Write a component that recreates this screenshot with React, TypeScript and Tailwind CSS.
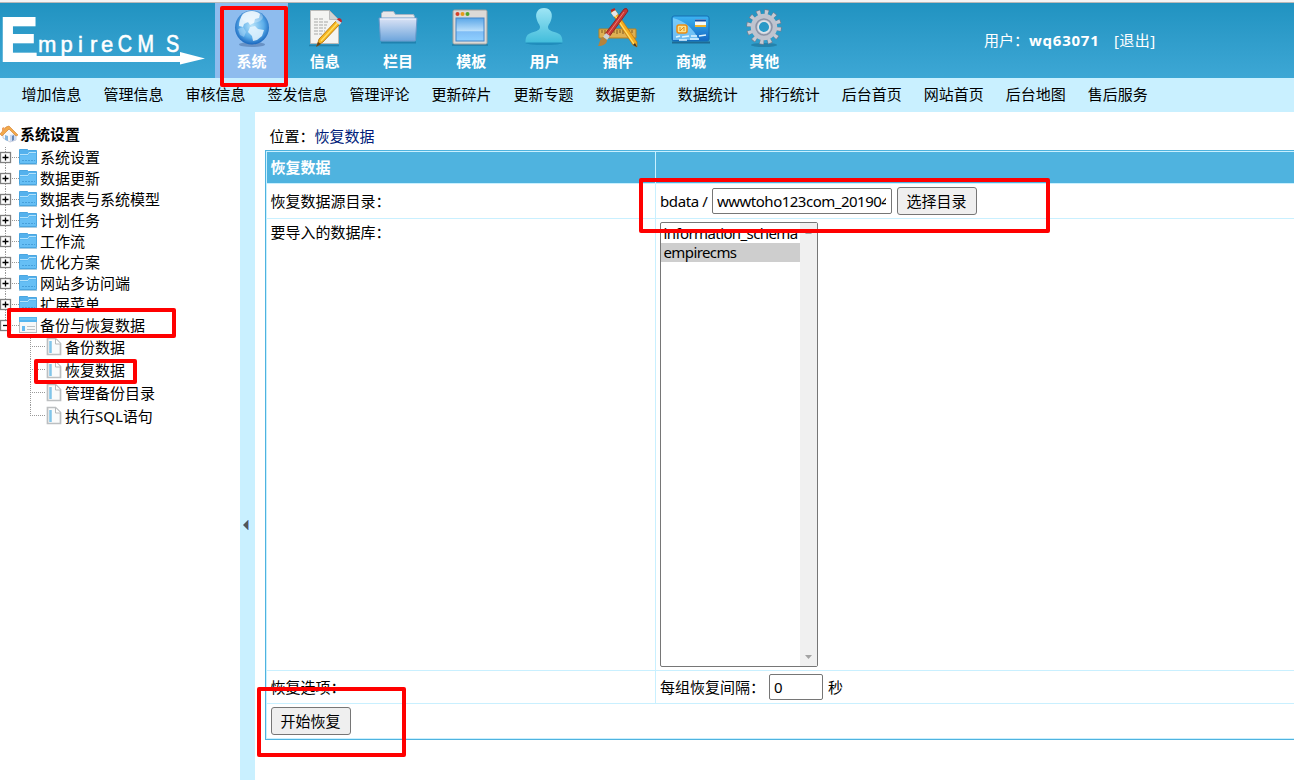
import React from 'react';

const SystemIcon = () => (
  <svg width="40" height="40" viewBox="0 0 40 40">
    <defs>
      <radialGradient id="globe" cx="0.5" cy="0.45" r="0.58">
        <stop offset="0" stopColor="#b9e4fa" />
        <stop offset="0.6" stopColor="#5bade9" />
        <stop offset="1" stopColor="#0f5cb8" />
      </radialGradient>
    </defs>
    <ellipse cx="20" cy="36.500" rx="13" ry="2.500" fill="#4f75a8" opacity=".6" />
    <circle cx="20" cy="19.500" r="17" fill="url(#globe)" />
    <path d="M11 6c5-4 13-4 17 0l-1 4-4 1-1 4-4 2-2-3-4 2-1 3-4-1c0-4 1-8 4-12z" fill="#f2faff" opacity=".85" />
    <path d="M18 19l5-1 3 3 6 1-2 6-5 4-4 1-1-5-4-4z" fill="#e6f6ff" opacity=".85" />
    <path d="M6 21l5-2 3 5-2 5-4-2z" fill="#cdeaff" opacity=".4" />
    <ellipse cx="20" cy="9" rx="11" ry="6" fill="#fff" opacity=".3" />
  </svg>
);

const InfoIcon = () => (
  <svg width="40" height="40" viewBox="0 0 40 40">
    <path d="M4 37.500h30" stroke="#17678f" strokeWidth="1.500" opacity=".5" />
    <path d="M5.500 2.500h19l9 9v24h-28z" fill="#f4f4f2" stroke="#b9bab8" />
    <path d="M24.500 2.500v9h9z" fill="#d2d4d3" stroke="#aaa" strokeWidth=".7" />
    <path d="M9 11h10M9 14h14M9 17h13M9 20h12M9 23h11M9 26h8" stroke="#a7a8a6" strokeDasharray="4 1" />
    <path d="M31 13l4 3-17 18-6 4 2-7z" fill="#f7b51d" stroke="#ab6c05" strokeWidth=".8" />
    <path d="M33 14.500L16 33" stroke="#ffe06a" strokeWidth="1.300" />
    <path d="M30.500 13.500l2-2 4 3-2 2.500z" fill="#d8dce0" />
    <path d="M32 11.500c2-3 6 0 4.500 3z" fill="#c92225" />
    <path d="M13 34l-2 5 5-3z" fill="#6b461a" />
  </svg>
);

const ColumnIcon = () => (
  <svg width="42" height="40" viewBox="0 0 42 40">
    <defs>
      <linearGradient id="folder" x2="0" y2="1">
        <stop offset="0" stopColor="#dce3f5" />
        <stop offset="1" stopColor="#6da5dc" />
      </linearGradient>
    </defs>
    <path d="M4 34.500h35" stroke="#126792" strokeWidth="2" opacity=".5" />
    <path d="M4.500 13V5l2-1.500h10l2 3h18l1 2v5z" fill="#e7e7e9" stroke="#a4b5c6" />
    <path d="M2 10h38l-1.500 22q0 1-1 1h-33q-1 0-1-1z" fill="url(#folder)" stroke="#6d9aca" />
    <path d="M3 11h36" stroke="#f3f6ff" />
  </svg>
);

const TemplateIcon = () => (
  <svg width="40" height="40" viewBox="0 0 40 40">
    <defs>
      <linearGradient id="window" x2="0" y2="1">
        <stop offset="0" stopColor="#5aa6e8" />
        <stop offset="0.55" stopColor="#b9defb" />
        <stop offset="0.6" stopColor="#7fbdf6" />
        <stop offset="1" stopColor="#90d0ff" />
      </linearGradient>
    </defs>
    <path d="M1 37h36" stroke="#17678f" strokeWidth="1.500" opacity=".6" />
    <rect x="2" y="2" width="34" height="34" rx="1.500" fill="#dcdad7" stroke="#a1a09d" />
    <circle cx="6.500" cy="6" r="2" fill="#d54029" />
    <circle cx="11.500" cy="6" r="2" fill="#e69a19" />
    <circle cx="16.500" cy="6" r="2" fill="#51a62d" />
    <rect x="5" y="10" width="28" height="23" fill="url(#window)" stroke="#4386ca" />
  </svg>
);

const UserIcon = () => (
  <svg width="40" height="40" viewBox="0 0 40 40">
    <defs>
      <linearGradient id="person" x2="0" y2="1">
        <stop offset="0" stopColor="#9ee5f5" />
        <stop offset="1" stopColor="#42bddb" />
      </linearGradient>
    </defs>
    <ellipse cx="19" cy="35" rx="18.500" ry="2" fill="#1682b0" opacity=".6" />
    <path d="M19 0c-6 0-9 5-7.500 10.500C12.500 15 15 17 15 19c0 3-3 4-8 5.500C2 26 .5 29 .5 34.500h37c0-5.500-1.500-8.500-6.500-10-5-1.500-8-2.500-8-5.500 0-2 2.500-4 3.500-8.500C28 5 25 0 19 0z" fill="url(#person)" />
  </svg>
);

const PluginIcon = () => (
  <svg width="42" height="40" viewBox="0 0 42 40">
    <path d="M2 21h37v9H2z" fill="#deb053" stroke="#b8811e" />
    <path d="M5 22v3M8 22v4M11 22v3M14 22v4M17 22v3M20 22v4M23 22v3M26 22v4M29 22v3M32 22v4M35 22v3" stroke="#83591c" />
    <path d="M14 4l4-2 22 32v5l-4-2z" fill="#f5ab1f" stroke="#b97410" strokeWidth=".7" />
    <path d="M17 6l20 30" stroke="#ffe46d" strokeWidth="1.300" />
    <path d="M14 5l4-3 3 4-4 3z" fill="#e3e7e9" />
    <path d="M14 3l4-2" stroke="#bd2824" strokeWidth="2" />
    <path d="M38 35l2 4-4-2z" fill="#383331" />
    <path d="M27 1q3-2 4 2L12 29l-4-3z" fill="#c63734" stroke="#851a1d" strokeWidth=".8" />
    <path d="M27 4L11 26" stroke="#f17b70" />
    <path d="M9 25l4 3-3 4-4-3z" fill="#cdd2d3" />
    <path d="M6 29l4 3c0 4-4 6-9 6 2-3 1-7 5-9z" fill="#b5833b" />
  </svg>
);

const ShopIcon = () => (
  <svg width="42" height="40" viewBox="0 0 42 40">
    <defs>
      <linearGradient id="card" x2="0" y2="1">
        <stop offset="0" stopColor="#3cb4f2" />
        <stop offset="1" stopColor="#1468c4" />
      </linearGradient>
    </defs>
    <path d="M2 34.500h38" stroke="#164f75" strokeWidth="2" opacity=".65" />
    <rect x="2" y="8" width="37" height="25" rx="2" fill="url(#card)" stroke="#146fb3" />
    <path d="M3 10q17 4 26 22H3z" fill="#8ed7ff" opacity=".75" />
    <rect x="25" y="11.500" width="11" height="7" fill="#f7fafc" />
    <path d="M25 12.500h11" stroke="#1a4fa4" strokeWidth="2" />
    <path d="M25 18h11" stroke="#f2b530" strokeWidth="2" />
    <rect x="7" y="17" width="10" height="8" rx="2" fill="#fbe18d" stroke="#eb8d12" strokeWidth="1.500" />
    <path d="M10 19v4l4-4v4" stroke="#e48d17" fill="none" />
    <path d="M6 29l4-1m2 1l7-1m2 0h6m2 0l7-1M9 32h8m3-1h9" stroke="#e0f5ff" strokeWidth="1.500" />
  </svg>
);

const OtherIcon = () => (
  <svg width="40" height="40" viewBox="0 0 40 40">
    <ellipse cx="20" cy="37" rx="13" ry="2" fill="#176589" opacity=".5" />
    <circle cx="20" cy="19" r="14.500" fill="none" stroke="#737e91" strokeWidth="6.500" strokeDasharray="4 3.592" />
    <circle cx="20" cy="19" r="14.500" fill="none" stroke="#c5cad3" strokeWidth="5" strokeDasharray="3.200 4.392" strokeDashoffset="-.4" />
    <circle cx="20" cy="19" r="9.500" fill="none" stroke="#bfc4cf" strokeWidth="7.500" />
    <circle cx="20" cy="19" r="8" fill="none" stroke="#8b93a6" strokeWidth="1.500" />
    <circle cx="20" cy="19" r="5.800" fill="none" stroke="#dfe3e9" strokeWidth="1.500" />
  </svg>
);

const Logo = () => (
  <svg width="215" height="75" viewBox="0 3 215 75" fill="#fff" stroke="#fff" fontFamily="Liberation Sans">
    <text transform="translate(0 61) scale(.9 1)" fontWeight="700" fontSize="63" strokeWidth="2.200">E</text>
    <text x="38 60.500 78 90 101" y="52" fontSize="22" strokeWidth=".5">mpire</text>
    <text transform="translate(0 52) scale(.86 1)" x="137 160 193" y="0" fontSize="23" strokeWidth=".6">CMS</text>
    <path d="M12 56h168v-4l25 6.500-25 6V62H12z" stroke="none" />
  </svg>
);

const HomeIcon = () => (
  <svg width="18" height="18" viewBox="0 0 18 18" className="shrink-0">
    <path d="M3 8l7-5 6 6v6l-6 2-7-4z" fill="#f7f8fa" stroke="#b5b9c8" strokeWidth=".7" />
    <path d="M10 10v7l6-2V9z" fill="#ccd8ee" />
    <path d="M0 9L6 2l3-1 9 9-2 1-7-7-7 7z" fill="#f3a94a" stroke="#ce7a2a" strokeWidth=".6" />
    <path d="M2 3l2-1 1 2-3 3z" fill="#eda15f" />
    <path d="M5 10l3 1v5l-3-1z" fill="#86b5df" />
    <path d="M12 11l2-1v5l-2 1z" fill="#6587b8" />
  </svg>
);

const FolderIcon = ({ minus = false }: { minus?: boolean }) => (
  <svg width="40" height="21" viewBox="0 0 40 21" className="shrink-0">
    <path d={minus ? 'M5.500 0v5' : 'M5.500 0v21'} stroke="#999" strokeDasharray="1 1" />
    <path d="M12 10.500h7" stroke="#999" strokeDasharray="1 1" />
    <rect x=".5" y="5.500" width="10" height="10" fill="#fff" stroke="#808080" strokeWidth="1.300" />
    <path d={minus ? 'M3 10.500h5' : 'M2.500 10.500h6M5.500 7.500v6'} stroke="#000" strokeWidth="1.300" />
    {minus ? (
      <>
        <rect x="19.500" y="2.500" width="17" height="15" fill="#f6f8f8" stroke="#b7bdc0" />
        <path d="M19 2h18v5H19z" fill="#55b6ef" />
        <path d="M20 4h16" stroke="#8bd3fa" />
        <path d="M22 11h3v5h-3z" fill="#64baf0" />
        <path d="M27 11.500h8m-8 3h8" stroke="#bdc3c6" />
      </>
    ) : (
      <>
        <path d="M19.500 2.500h8l1 1h8v13h-17z" fill="#54b1ed" stroke="#4ba6e0" />
        <path d="M20 7.500h8l1-2h7" stroke="#b5e3fb" fill="none" />
        <path d="M20 8.500h8l1-2h7V16H20z" fill="#66bff5" />
        <path d="M22 13.500h13" stroke="#469fda" strokeDasharray="2 1" />
        <path d="M19 17.500h18" stroke="#a9cce0" />
      </>
    )}
  </svg>
);

const PageIcon = ({ last }: { last: boolean }) => (
  <svg width="65" height="23" viewBox="0 0 65 23" className="shrink-0">
    <path d={last ? 'M30.500 0v11' : 'M30.500 0v23'} stroke="#999" strokeDasharray="1 1" />
    <path d="M32 10.500h13" stroke="#999" strokeDasharray="1 1" />
    <path d="M47.500 2.500h8l5 5v11h-13z" fill="#fafbfb" stroke="#bcbfc1" strokeWidth="1.700" />
    <path d="M55.500 3v5h5" fill="#fff" stroke="#b6babc" />
    <path d="M50.500 5v12" stroke="#81c5e9" strokeWidth="2.500" />
  </svg>
);

const nav = [
  { label: '系统', Icon: SystemIcon },
  { label: '信息', Icon: InfoIcon },
  { label: '栏目', Icon: ColumnIcon },
  { label: '模板', Icon: TemplateIcon },
  { label: '用户', Icon: UserIcon },
  { label: '插件', Icon: PluginIcon },
  { label: '商城', Icon: ShopIcon },
  { label: '其他', Icon: OtherIcon },
];

const shortcuts = ['增加信息', '管理信息', '审核信息', '签发信息', '管理评论', '更新碎片', '更新专题', '数据更新', '数据统计', '排行统计', '后台首页', '网站首页', '后台地图', '售后服务'];
const folders = ['系统设置', '数据更新', '数据表与系统模型', '计划任务', '工作流', '优化方案', '网站多访问端', '扩展菜单', '备份与恢复数据'];
const pages = ['备份数据', '恢复数据', '管理备份目录', '执行SQL语句'];

const highlights = [
  'left-[220px] top-[6px] w-[68px] h-[81px]',
  'left-[639px] top-[178px] w-[411px] h-[55px]',
  'left-[7px] top-[308px] w-[169px] h-[30px]',
  'left-[34px] top-[359px] w-[103px] h-[25px]',
  'left-[257px] top-[687px] w-[149px] h-[70px]',
];

const buttonClass = 'h-7 w-20 shrink-0 rounded-[3px] border border-[#767676] bg-[#efefef] pr-px text-center leading-[25px]';
const inputClass = 'h-[26px] shrink-0 rounded-[2px] border border-[#767676] bg-white pr-[5px] pl-1 outline-none';

export default function App() {
  return (
    <div className="relative flex h-[780px] w-[1294px] flex-col overflow-hidden bg-white font-['Noto_Sans','Noto_Sans_CJK_SC',sans-serif] text-[15px] leading-[21px] whitespace-nowrap text-black">
      <div className="h-[3px] shrink-0 border-b border-[#b9b9b9] bg-[#f4f4f4]" />
      <header className="flex h-[75px] shrink-0 bg-linear-to-b from-[#2093c1] to-[#3da7d5] text-white">
        <div className="w-[215px] shrink-0"><Logo /></div>
        <nav className="grid w-[586px] shrink-0 grid-cols-8">
          {nav.map(({ label, Icon }, i) => (
            <div key={label} className={`flex flex-col items-center pt-[5px] ${i === 0 ? 'bg-[#8ebcee]' : ''}`}>
              <Icon />
              <span className="mt-[3px] font-bold">{label}</span>
            </div>
          ))}
        </nav>
        <div className="ml-[183px] flex pt-[27px]">
          <span className="w-[45px]">用户：</span>
          <b className="w-[85px] tracking-[0.75px]">wq63071</b>
          <span className="tracking-[0.4px]">[退出]</span>
        </div>
      </header>
      <div className="flex h-[34px] shrink-0 gap-[22px] bg-[#c9f0ff] pt-[6px] pl-[21.5px]">
        {shortcuts.map((s) => <span key={s}>{s}</span>)}
      </div>
      <div className="flex min-h-0 grow">
        <aside className="w-[240px] shrink-0 pt-[11px]">
          <div className="mb-[2px] flex h-[22px] items-center gap-[2px] font-bold"><HomeIcon />系统设置</div>
          {folders.map((f, i) => (
            <div key={f} className="flex h-[21px] items-center"><FolderIcon minus={i === 8} />{f}</div>
          ))}
          {pages.map((p, i) => (
            <div key={p} className="flex h-[23px] items-center"><PageIcon last={i === 3} />{p}</div>
          ))}
        </aside>
        <div className="flex w-[15px] shrink-0 items-center bg-[#c9f0ff] pt-[158px] pl-[3px]">
          <svg width="7" height="10" viewBox="0 0 7 10"><path d="M0 5l5-5v10z" fill="#555" /><path d="M5.500 0v10" stroke="#79a8ee" /></svg>
        </div>
        <main className="grow pt-[14px] pl-[10px]">
          <div className="mb-[3px] flex h-[21px] pl-[4.5px]">
            <span className="w-[45px]">位置：</span><span className="text-[#001c7a]">恢复数据</span>
          </div>
          <div className="w-[1040px] border border-[#4fb3df]">
            <div className="border border-[#c9f0ff]">
              <div className="grid h-8 grid-cols-[389px_1fr] border-b border-[#c9f0ff] bg-[#4fb3df] font-bold text-white">
                <div className="border-r border-[#c9f0ff] pt-[5px] pl-[3.5px]">恢复数据</div>
                <div />
              </div>
              <div className="grid h-[35px] grid-cols-[389px_1fr] border-b border-[#c9f0ff]">
                <div className="border-r border-[#c9f0ff] pt-[7px] pl-[3.5px]">恢复数据源目录：</div>
                <div className="flex items-center pl-1">
                  <span className="w-[52px] tracking-[-0.4px]">bdata /</span>
                  <input className={`${inputClass} w-[180px] tracking-[-0.5px]`} defaultValue="wwwtoho123com_20190424" />
                  <button className={`${buttonClass} ml-[5px]`}>选择目录</button>
                </div>
              </div>
              <div className="grid h-[452px] grid-cols-[389px_1fr] border-b border-[#c9f0ff]">
                <div className="border-r border-[#c9f0ff] pt-[3px] pl-[3.5px]">要导入的数据库：</div>
                <div className="pt-[3px] pl-1">
                  <div className="flex h-[445px] w-[158px] rounded-[2px] border border-[#767676]">
                    <div className="w-[139px] shrink-0 pt-px leading-[19px] tracking-[-0.6px]">
                      <div className="h-[19px] pl-[2.5px] leading-[18px]">information_schema</div>
                      <div className="h-[19px] bg-[#cecece] pl-[2.5px]">empirecms</div>
                    </div>
                    <div className="flex grow flex-col items-center justify-between bg-[#f0f0f0] py-[7px]">
                      <svg width="7" height="4" viewBox="0 0 7 4"><path d="M0 4h7L3.500 0z" fill="#a3a3a3" /></svg>
                      <svg width="7" height="4" viewBox="0 0 7 4"><path d="M0 0h7L3.500 4z" fill="#a3a3a3" /></svg>
                    </div>
                  </div>
                </div>
              </div>
              <div className="grid h-[33px] grid-cols-[389px_1fr] border-b border-[#c9f0ff]">
                <div className="border-r border-[#c9f0ff] pt-[6px] pl-[3.5px]">恢复选项：</div>
                <div className="flex items-center pl-1">
                  <span className="w-[109px]">每组恢复间隔：</span>
                  <input className={`${inputClass} mr-[5px] w-[54px]`} defaultValue="0" />
                  秒
                </div>
              </div>
              <div className="flex h-[34px] items-center pl-1">
                <button className={buttonClass}>开始恢复</button>
              </div>
            </div>
          </div>
        </main>
      </div>
      {highlights.map((h) => (
        <div key={h} className={`pointer-events-none absolute rounded-[2px] border-4 border-[#ff0000] ${h}`} />
      ))}
    </div>
  );
}
